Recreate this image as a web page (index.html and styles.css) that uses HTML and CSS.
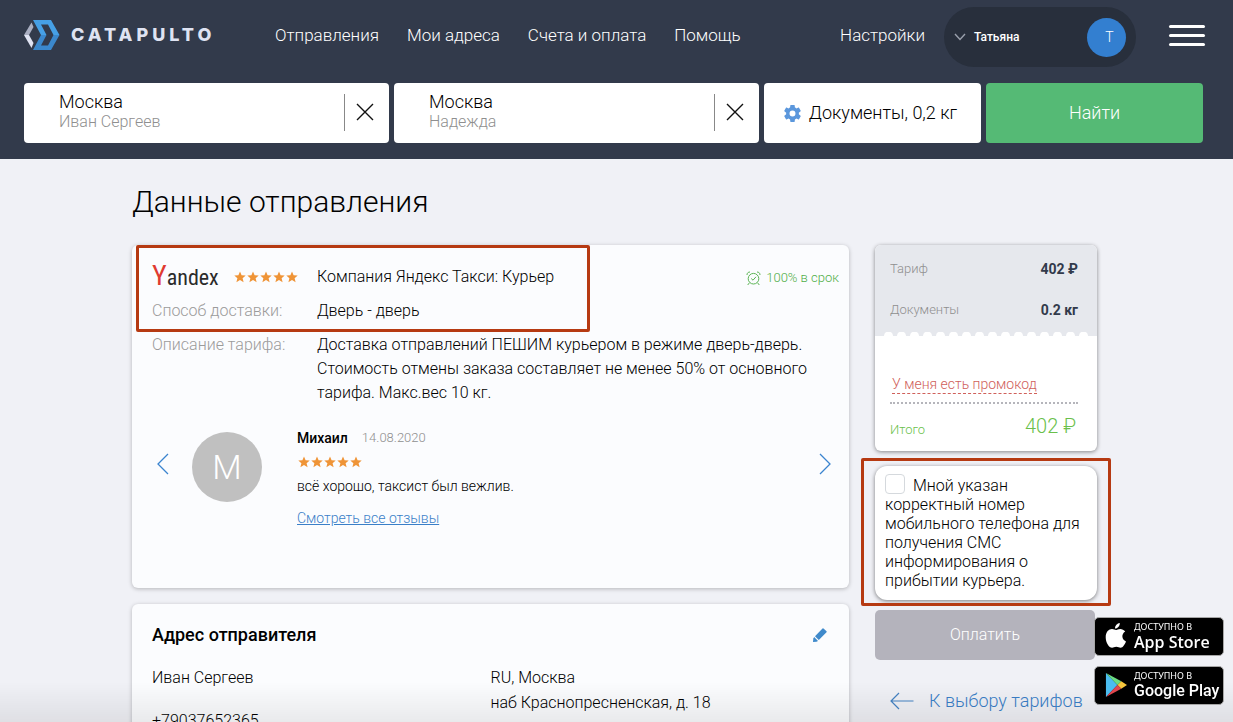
FILE: index.html
```html
<!DOCTYPE html>
<html lang="ru">
<head>
<meta charset="utf-8">
<title>Данные отправления</title>
<meta name="viewport" content="width=device-width, initial-scale=1">
<link rel="stylesheet" href="styles.css">
</head>
<body>
<svg class="defs" width="0" height="0" aria-hidden="true">
  <symbol id="star" viewBox="0 0 12 12"><path d="M6 .4 7.6 4.200 11.700 4.500 8.600 7.200 9.600 11.200 6 9 2.400 11.200 3.400 7.200.3 4.500 4.400 4.200z" fill="#ef9437"/></symbol>
</svg>
<header class="header">
  <div class="topbar">
    <a class="logo" href="#">
      <svg width="36" height="30" viewBox="0 0 36 30" aria-hidden="true">
        <path d="M0 15 7.500 2.500 9.500 7 5 15z" fill="#a9aec1"/>
        <path d="M0 15 7.500 28 9.500 23 5 15z" fill="#dfe3f2"/>
        <path d="M9 0H27L35.500 15H29.500L24 4.500H17L22.500 15H17z" fill="#46a0e6"/>
        <path d="M9 30H27L35.500 15H29.500L24 25.500H17L22.500 15H17z" fill="#3b88cd"/>
      </svg>
      <span class="wordmark">CATAPULTO</span>
    </a>
    <nav class="nav">
      <a href="#">Отправления</a>
      <a href="#">Мои адреса</a>
      <a href="#">Счета и оплата</a>
      <a href="#">Помощь</a>
    </nav>
    <a class="settings" href="#">Настройки</a>
    <button class="user" type="button">
      <svg width="12" height="8" viewBox="0 0 12 8" aria-hidden="true"><path d="M1 1 6 6.500 11 1" fill="none" stroke="#9aa0ac" stroke-width="1.400"/></svg>
      <span class="user-name">Татьяна</span>
      <span class="user-avatar">Т</span>
    </button>
    <button class="burger" type="button" aria-label="Меню"><span></span><span></span><span></span></button>
  </div>
  <form class="search">
    <div class="place">
      <div class="place-text"><div class="city">Москва</div><div class="person">Иван Сергеев</div></div>
      <button class="clear" type="button" aria-label="Очистить"><svg width="18" height="18" viewBox="0 0 18 18"><path d="M1 1 17 17M17 1 1 17" stroke="#111" stroke-width="1.400"/></svg></button>
    </div>
    <div class="place">
      <div class="place-text"><div class="city">Москва</div><div class="person">Надежда</div></div>
      <button class="clear" type="button" aria-label="Очистить"><svg width="18" height="18" viewBox="0 0 18 18"><path d="M1 1 17 17M17 1 1 17" stroke="#111" stroke-width="1.400"/></svg></button>
    </div>
    <button class="cargo" type="button">
      <svg width="17" height="17" viewBox="2 2 20 20" aria-hidden="true"><path fill="#5b97dc" d="M19.430 12.980c.04-.32.070-.64.070-.98s-.03-.66-.07-.98l2.110-1.650c.19-.15.240-.42.120-.64l-2-3.460c-.12-.22-.39-.3-.61-.22l-2.490 1c-.52-.4-1.080-.73-1.690-.98l-.38-2.650C14.460 2.180 14.250 2 14 2h-4c-.25 0-.46.180-.49.420l-.38 2.650c-.61.250-1.170.590-1.690.980l-2.490-1c-.23-.09-.49 0-.61.220l-2 3.460c-.13.220-.07.490.120.640l2.110 1.650c-.04.320-.07.650-.07.980s.03.660.070.980l-2.110 1.650c-.19.150-.24.420-.12.640l2 3.460c.12.220.39.300.61.220l2.490-1c.52.400 1.080.730 1.690.980l.38 2.650c.03.240.24.420.49.420h4c.25 0 .46-.18.490-.42l.38-2.650c.61-.25 1.170-.59 1.690-.98l2.490 1c.23.090.49 0 .61-.22l2-3.460c.12-.22.070-.49-.12-.64zM12 15.500a3.500 3.500 0 1 1 0-7 3.500 3.500 0 0 1 0 7z"/></svg>
      <span>Документы, 0,2 кг</span>
    </button>
    <button class="find" type="submit">Найти</button>
  </form>
</header>

<main class="main">
  <h1 class="title">Данные отправления</h1>
  <div class="columns">
    <div class="left">
      <section class="card tariff">
        <div class="mark mark-tariff"></div>
        <div class="row">
          <div class="brand">
            <span class="yandex"><span class="yandex-y">Y</span>andex</span>
            <span class="stars"><svg><use href="#star"/></svg><svg><use href="#star"/></svg><svg><use href="#star"/></svg><svg><use href="#star"/></svg><svg><use href="#star"/></svg></span>
          </div>
          <div class="value">Компания Яндекс Такси: Курьер</div>
          <div class="ontime">
            <svg width="15" height="15" viewBox="0 0 15 15" fill="none" stroke="#5cb555" aria-hidden="true"><circle cx="7.500" cy="7.700" r="5.300"/><path d="M5.200 7.500 7 9.200 10 5.800M1 4C1 2 2.200 1 4 1M14 4C14 2 12.800 1 11 1M3.500 11.700 1.700 14M11.500 11.700 13.300 14"/></svg>
            100% в срок
          </div>
        </div>
        <div class="row"><div class="label">Способ доставки:</div><div class="value">Дверь - дверь</div></div>
        <div class="row"><div class="label">Описание тарифа:</div><div class="value description">Доставка отправлений ПЕШИМ курьером в режиме дверь-дверь. Стоимость отмены заказа составляет не менее 50% от основного тарифа. Макс.вес 10 кг.</div></div>
        <div class="review">
          <button class="arrow" type="button" aria-label="Предыдущий отзыв"><svg width="12" height="22" viewBox="0 0 12 22"><path d="M11 1 1 11 11 21" fill="none" stroke="#3a84cf" stroke-width="1.300"/></svg></button>
          <div class="review-avatar">М</div>
          <div class="review-body">
            <div class="review-head"><b>Михаил</b><time>14.08.2020</time></div>
            <div class="stars"><svg><use href="#star"/></svg><svg><use href="#star"/></svg><svg><use href="#star"/></svg><svg><use href="#star"/></svg><svg><use href="#star"/></svg></div>
            <div class="review-text">всё хорошо, таксист был вежлив.</div>
            <a href="#">Смотреть все отзывы</a>
          </div>
          <button class="arrow" type="button" aria-label="Следующий отзыв"><svg width="12" height="22" viewBox="0 0 12 22"><path d="M1 1 11 11 1 21" fill="none" stroke="#3a84cf" stroke-width="1.300"/></svg></button>
        </div>
      </section>

      <section class="card sender">
        <div class="sender-head">
          <h2>Адрес отправителя</h2>
          <button class="edit" type="button" aria-label="Изменить"><svg width="14" height="14" viewBox="0 0 14 14"><path d="M9.500 0.500Q10 0 10.500.5L13.500 3.300Q14 3.800 13.500 4.300L5.800 12 2 8.200z" fill="#3f8acb"/><path d="M1.200 9.100 5 12.900 3.500 13.700 0 14 .3 10.600z" fill="#3f8acb"/></svg></button>
        </div>
        <div class="sender-grid">
          <div class="contact"><div>Иван Сергеев</div><div>+79037652365</div></div>
          <div>RU, Москва<br>наб Краснопресненская, д. 18</div>
        </div>
      </section>
    </div>

    <aside class="side">
      <section class="receipt">
        <div class="receipt-top">
          <div class="line"><span>Тариф</span><b>402 ₽</b></div>
          <div class="line"><span>Документы</span><b>0.2 кг</b></div>
          <div class="scallops"></div>
        </div>
        <div class="receipt-bottom">
          <a class="promo" href="#">У меня есть промокод</a>
          <div class="total"><span>Итого</span><strong>402 ₽</strong></div>
        </div>
      </section>
      <div class="confirm">
        <div class="mark mark-confirm"></div>
        <input type="checkbox" id="phone-ok"><label for="phone-ok">Мной указан корректный номер мобильного телефона для получения СМС информирования о прибытии курьера.</label>
      </div>
      <button class="pay" type="button">Оплатить</button>
      <a class="back" href="#">
        <svg width="24" height="18" viewBox="0 0 24 18" aria-hidden="true"><path d="M23.500 9H1M9 1 1 9 9 17" fill="none" stroke="#4583c4" stroke-width="1.200"/></svg>
        К выбору тарифов
      </a>
    </aside>
  </div>
</main>

<div class="fade"></div>
<div class="stores">
  <a class="store" href="#">
    <svg width="22" height="26" viewBox="0 0 22 26" aria-hidden="true"><path fill="#fff" d="M14.800 0c.2 2.900-2.200 5.600-4.700 5.500C9.800 2.900 12.300.2 14.800 0zM10.900 7.100c1 0 2.300-1.200 4.400-1.200 1.800 0 3.700.9 4.900 2.700-4.200 2.500-3.500 8.300.8 9.900-.9 2.400-3.100 6.300-5.400 6.300-1.600 0-2.300-1-4.300-1s-2.800 1-4.200 1C4.100 24.800.7 19.500.7 14.200.7 9 3.900 6.100 7 6.100c1.700 0 3 1 3.900 1z"/></svg>
    <span class="store-text"><small>Доступно в</small><span class="apple">App Store</span></span>
  </a>
  <a class="store" href="#">
    <svg width="22" height="26" viewBox="0 0 23 26" aria-hidden="true"><path d="M1 .5 13 13 1 25.500z" fill="#4bbdf0"/><path d="M1 .5 17 9 13 13z" fill="#6bdc82"/><path d="M17 9 23 13 17 17 13 13z" fill="#f7c53c"/><path d="M1 25.500 17 17 13 13z" fill="#e2474f"/></svg>
    <span class="store-text"><small>Доступно в</small><span class="google">Google Play</span></span>
  </a>
</div>
</body>
</html>
```
FILE: styles.css
```css
* { box-sizing: border-box; }

body {
  margin: 0;
  height: 100vh;
  overflow: hidden;
  background: #f0f1f6;
  color: #000;
  font: 300 16px/24px Roboto, "Liberation Sans", sans-serif;
}

button {
  margin: 0;
  padding: 0;
  border: 0;
  background: none;
  color: inherit;
  font: inherit;
  cursor: pointer;
}

a { color: #3a7fc8; text-decoration: none; }
svg { display: block; flex: none; }
.defs { position: absolute; }

/* Header */
.header {
  padding: 0 30px 16px 24px;
  background: #323a4b;
}

.topbar {
  display: flex;
  align-items: center;
  height: 83px;
  padding-bottom: 13px;
  color: #fff;
}

.logo { display: flex; align-items: center; gap: 11px; color: #dfe3f2; }
.wordmark { width: 148px; font: 800 18px/24px Inter, sans-serif; letter-spacing: 4px; }
.nav { display: flex; gap: 28px; margin-left: 56px; }
.nav a, .settings { color: #fff; font-size: 17px; }
.settings { margin-left: auto; }

.user {
  display: flex;
  align-items: center;
  width: 192px;
  height: 60px;
  margin: 4px 0 0 19px;
  padding: 0 10px;
  border-radius: 30px;
  background: #282f3c;
}

.user-name { margin-left: 8px; font-size: 12px; font-weight: 500; }
.user-avatar {
  width: 39px;
  margin-left: auto;
  padding-left: 6px;
  border-radius: 50%;
  background: #337fd0;
  font-size: 14px;
  line-height: 39px;
}

.burger { display: grid; gap: 6px; width: 36px; margin: 0 -2px 0 33px; }
.burger span { height: 3px; border-radius: 2px; background: #fff; }

.search {
  display: grid;
  grid-template-columns: 365fr 365fr 217fr 217fr;
  gap: 5px;
}

.place, .cargo, .find { height: 60px; border-radius: 4px; background: #fff; color: #000; }
.place { display: flex; align-items: center; padding: 0 0 2px 35px; }
.place-text { flex: 1; line-height: 20px; }
.city { font-size: 18px; }
.person { color: #8f8f8f; }
.clear {
  display: flex;
  align-items: center;
  height: 37px;
  padding: 0 15px 0 11px;
  border-left: 1px solid #888;
}

.cargo { display: flex; align-items: center; justify-content: center; gap: 8px; padding-right: 4px; font-size: 18px; white-space: nowrap; }
.find { background: #55ba75; color: #fff; font-size: 18px; }

/* Page */
.main { padding: 25px 136px 0 132px; }
.title { margin: 0 0 25px; font-size: 30px; font-weight: 300; line-height: 36px; }
.columns { display: grid; grid-template-columns: 1fr 222px; gap: 26px; align-items: start; }
.left { display: grid; gap: 16px; }

.card {
  position: relative;
  border-radius: 6px;
  background: #fbfcfe;
  box-shadow: 0 1px 4px rgba(0, 0, 0, .25);
}

/* Highlight frames lie over the cards */
.mark { position: absolute; border: 3px solid #b63a12; border-radius: 2px; pointer-events: none; }
.mark-tariff { top: 0; left: 4px; width: 454px; height: 87px; }
.mark-confirm { inset: -8px -14px -6px; }

.tariff { display: grid; gap: 10px; padding: 20px 10px 58px 20px; }
.row { display: grid; grid-template-columns: 165px 1fr auto; }
.label { color: #9b9b9b; }
.description { max-width: 500px; }
.brand { display: flex; align-items: center; height: 24px; }
.yandex {
  width: 82px;
  color: #2b2b2b;
  font: 400 22px/24px "Roboto Condensed", "Open Sans Condensed", "Liberation Sans Narrow", sans-serif;
}
.yandex-y { color: #e03a31; font-size: 28px; }
.stars { display: flex; gap: 1px; }
.stars svg { width: 12px; height: 12px; }
.ontime { display: flex; align-items: center; gap: 5px; height: 24px; padding-top: 2px; color: #4fae47; font-size: 13px; }

.review { display: flex; align-items: flex-start; margin: 7px 8px 0 5px; }
.arrow { margin-top: 31px; }
.review-avatar {
  width: 70px;
  margin: 10px 35px 0 23px;
  border-radius: 50%;
  background: #c0c0c0;
  color: #fff;
  font-size: 34px;
  line-height: 70px;
  text-align: center;
}
.review-body { flex: 1; margin-top: 4px; font-size: 14px; }
.review-head { display: flex; gap: 14px; }
.review-head b { font-weight: 500; }
.review-head time { color: #8f8f8f; font-size: 13px; }
.review-body .stars { height: 24px; align-items: center; padding-left: 1px; }
.review-text { margin-bottom: 8px; }
.review-body a { text-decoration: underline; }

.sender { padding: 19px 20px; }
.sender-head { display: flex; align-items: center; justify-content: space-between; }
.sender-head h2 { margin: 0; font-size: 18px; font-weight: 500; line-height: 24px; }
.edit { padding-right: 2px; }
.sender-grid { display: grid; grid-template-columns: 1fr 1fr; margin-top: 18px; line-height: 25px; }
.contact { display: grid; gap: 18px; align-content: start; }

/* Order summary */
.receipt {
  overflow: hidden;
  border-radius: 6px;
  background: #fff;
  box-shadow: 0 1px 4px rgba(0, 0, 0, .45);
}
.receipt-top { padding: 12px 19px 0 15px; background: #e6e8ed; }
.line { display: flex; align-items: center; justify-content: space-between; margin-bottom: 17px; }
.line span, .total span { font-size: 13px; }
.line span { color: #8f8f8f; }
.line b { color: #323a4b; font-size: 14px; font-weight: 700; }
.scallops {
  height: 4px;
  margin: -7px -10px 0 -8px;
  background: radial-gradient(circle at 50% 100%, #fff 4px, transparent 5px) 0 0 / 13px 4px;
}
.receipt-bottom { padding: 36px 19px 9px 15px; }
.promo {
  display: inline-block;
  margin: 0 2px 8px;
  border-bottom: 1px dashed #d0605a;
  color: #d0605a;
  font-size: 14px;
  line-height: 18px;
}
.total {
  display: flex;
  align-items: flex-start;
  justify-content: space-between;
  padding-top: 10px;
  border-top: 2px dotted #b5b5bb;
  color: #6abf4b;
}
.total span { padding-top: 4px; }
.total strong { font-size: 20px; font-weight: 300; padding-right: 2px; }

.confirm {
  position: relative;
  margin-top: 15px;
  padding: 10px;
  border-radius: 12px;
  background: #fff;
  box-shadow: 0 1px 4px rgba(0, 0, 0, .5);
  line-height: 19px;
}
.confirm input {
  float: left;
  width: 20px;
  height: 20px;
  margin: -2px 8px 0 0;
  border: 1px solid #d5d9dd;
  border-radius: 4px;
  background: #fff;
  appearance: none;
}

.pay {
  width: 220px;
  height: 50px;
  margin-top: 10px;
  border-radius: 5px;
  background: #b4b3bc;
  color: #fff;
}
.back { display: flex; align-items: center; gap: 15px; margin: 29px 0 0 15px; font-size: 18px; white-space: nowrap; }

/* Overlays */
.fade {
  position: fixed;
  inset: auto 0 0;
  height: 40px;
  background: linear-gradient(transparent, rgba(0, 0, 0, .07));
  pointer-events: none;
}
.stores { position: fixed; right: 9px; bottom: 17px; display: grid; gap: 10px; }
.store {
  display: flex;
  align-items: center;
  gap: 7px;
  width: 130px;
  height: 39px;
  padding: 0 0 2px 10px;
  border: 1px solid #a6a6a6;
  border-radius: 5px;
  background: #000;
  color: #fff;
}
.store-text { display: grid; grid-template-rows: 12px 18px; white-space: nowrap; }
.store-text small { font: 400 9px/12px "Noto Sans", sans-serif; text-transform: uppercase; }
.apple { font: 600 16px/18px "Open Sans", sans-serif; }
.google { font: 500 16px/18px Roboto, sans-serif; }
```
